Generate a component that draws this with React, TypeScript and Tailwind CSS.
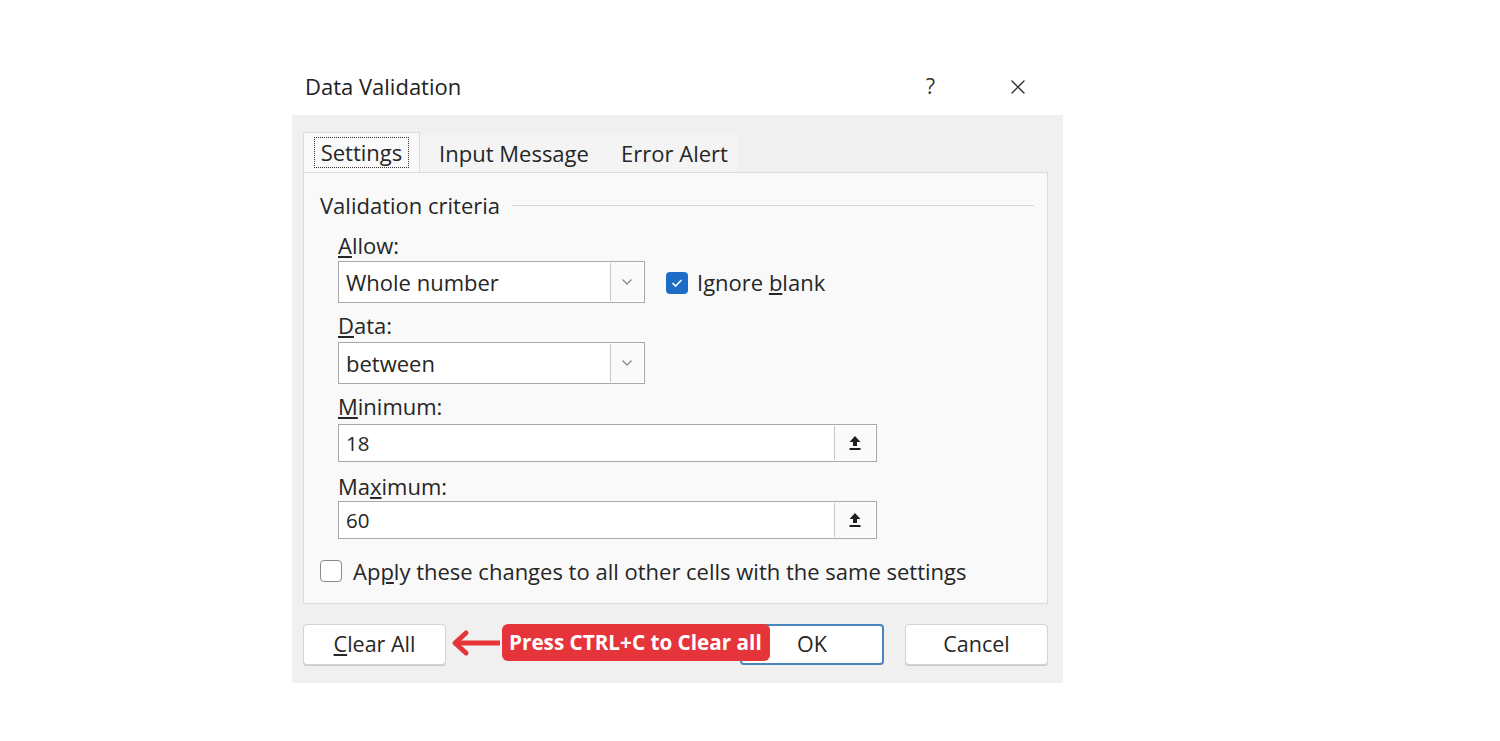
import { X } from 'lucide-react';

const font = { fontFamily: '"Open Sans", "Noto Sans", sans-serif' };

function Chevron() {
  return (
    <svg width="12" height="8" viewBox="0 0 12 8" aria-hidden="true">
      <path d="M1.5 1.5 L6 6 L10.5 1.5" fill="none" stroke="#8a8a8a" strokeWidth="1.3" />
    </svg>
  );
}

function UploadArrow() {
  return (
    <svg width="14" height="16" viewBox="0 0 14 16" aria-hidden="true">
      <path d="M7 1 L1.5 7 H5 V11 H9 V7 H12.5 Z" fill="#1f1f1f" />
      <rect x="1.5" y="13" width="11" height="2" fill="#1f1f1f" />
    </svg>
  );
}

function Combo({ value }: { value: string }) {
  return (
    <div className="flex h-[42px] w-[307px] border border-[#a9a9a9] bg-white">
      <div className="flex flex-1 items-center pl-[7px] text-[22px] text-[#262626]">{value}</div>
      <div className="m-[1px] flex w-[33px] items-center justify-center border-l border-[#c8c8c8] bg-[#fafafa]">
        <Chevron />
      </div>
    </div>
  );
}

function RangeInput({ value }: { value: string }) {
  return (
    <div className="flex h-[38px] w-[539px] border border-[#a9a9a9] bg-white">
      <div className="flex flex-1 items-center pl-[7px] text-[20.5px] text-[#262626]">{value}</div>
      <div className="m-[1px] flex w-[41px] items-center justify-center border-l border-[#c8c8c8] bg-[#fafafa]">
        <UploadArrow />
      </div>
    </div>
  );
}

export default function App() {
  return (
    <div className="min-h-screen bg-white pl-[292px] pt-[58px] text-[#262626]" style={font}>
      <div className="w-[771px]">
        {/* title bar */}
        <div className="flex h-[57px] items-center bg-white pl-[13px]">
          <span className="text-[22px] text-[#222]">Data Validation</span>
          <span className="ml-auto mr-[71px] text-[21px] text-[#333]">?</span>
          <X className="mr-[33px] h-[24px] w-[24px] text-[#333]" strokeWidth={1.4} aria-hidden="true" />
        </div>

        {/* body */}
        <div className="h-[568px] bg-[#f0f0f0] pl-[11px] pr-[15px] pt-[17px]">
          {/* tabs */}
          <div className="flex h-[40px] items-end text-[22px]">
            <div className="flex h-[40px] w-[117px] items-center justify-center border border-b-0 border-[#dcdcdc] bg-[#f9f9f9]">
              <span className="border border-dotted border-[#333] px-[6px] leading-[29px]">Settings</span>
            </div>
            <div className="flex h-[37px] w-[182px] items-center justify-center bg-[#f4f4f4] pl-[6px]">Input Message</div>
            <div className="flex h-[37px] w-[135px] items-center justify-center bg-[#f4f4f4] pl-[10px]">Error Alert</div>
          </div>

          {/* panel */}
          <div className="h-[432px] border border-[#dcdcdc] bg-[#f9f9f9] pl-[16px] pr-[13px] pt-[19px] text-[22px]">
            <div className="flex h-[26px] items-center gap-[12px]">
              <span>Validation criteria</span>
              <div className="h-px flex-1 bg-[#d8d8d8]" />
            </div>

            <div className="pl-[18px]">
              <div className="mt-[16px] h-[22px] leading-[22px]">
                <span className="underline underline-offset-2">A</span>llow:
              </div>
              <div className="mt-[5px] flex items-start">
                <Combo value="Whole number" />
                <div className="ml-[21px] mt-[5px] flex items-center">
                  <div className="flex h-[22px] w-[22px] items-center justify-center rounded-[4px] bg-[#1d6dc6]">
                    <svg width="12" height="10" viewBox="0 0 12 10" aria-hidden="true">
                      <path d="M1.5 5 L4.5 8 L10.5 2" fill="none" stroke="white" strokeWidth="1.6" />
                    </svg>
                  </div>
                  <span className="ml-[9px]">
                    Ignore <span className="underline underline-offset-2">b</span>lank
                  </span>
                </div>
              </div>

              <div className="mt-[11px] h-[22px] leading-[22px]">
                <span className="underline underline-offset-2">D</span>ata:
              </div>
              <div className="mt-[6px]">
                <Combo value="between" />
              </div>

              <div className="mt-[11px] h-[22px] leading-[22px]">
                <span className="underline underline-offset-2">M</span>inimum:
              </div>
              <div className="mt-[7px]">
                <RangeInput value="18" />
              </div>

              <div className="mt-[13px] h-[22px] leading-[22px]">
                Ma<span className="underline underline-offset-2">x</span>imum:
              </div>
              <div className="mt-[4px]">
                <RangeInput value="60" />
              </div>
            </div>

            <div className="mt-[21px] flex h-[22px] items-center">
              <div className="h-[22px] w-[22px] rounded-[4px] border border-[#8a8a8a] bg-white" />
              <span className="ml-[11px]">
                Ap<span className="underline underline-offset-2">p</span>ly these changes to all other cells with the same settings
              </span>
            </div>
          </div>

          {/* buttons */}
          <div className="relative mt-[20px] flex items-center text-[21.5px]">
            <button
              type="button"
              className="flex h-[41px] w-[143px] items-center justify-center rounded-[4px] border border-[#d4d4d4] bg-white shadow-[0_1px_0_#c8c8c8]"
            >
              <span className="underline underline-offset-2">C</span>lear All
            </button>
            <div className="ml-auto flex gap-[21px]">
              <button
                type="button"
                className="flex h-[41px] w-[144px] items-center justify-center rounded-[4px] border-2 border-[#4a86bd] bg-white"
              >
                OK
              </button>
              <button
                type="button"
                className="flex h-[41px] w-[143px] items-center justify-center rounded-[4px] border border-[#d4d4d4] bg-white shadow-[0_1px_0_#c8c8c8]"
              >
                Cancel
              </button>
            </div>

            {/* annotation */}
            <div className="absolute left-[147px] top-0 flex items-center">
              <svg width="52" height="30" viewBox="0 0 52 30" aria-hidden="true">
                <path d="M50 15 H8" stroke="#e5353a" strokeWidth="5" />
                <path d="M16 5 L5 15 L16 25" fill="none" stroke="#e5353a" strokeWidth="5" strokeLinecap="round" strokeLinejoin="round" />
              </svg>
              <div className="flex h-[37px] w-[268px] items-center rounded-[6px] bg-[#e5353a] pl-[7px] text-[20.7px] font-bold text-white">
                Press CTRL+C to Clear all
              </div>
            </div>
          </div>
        </div>
      </div>
    </div>
  );
}
